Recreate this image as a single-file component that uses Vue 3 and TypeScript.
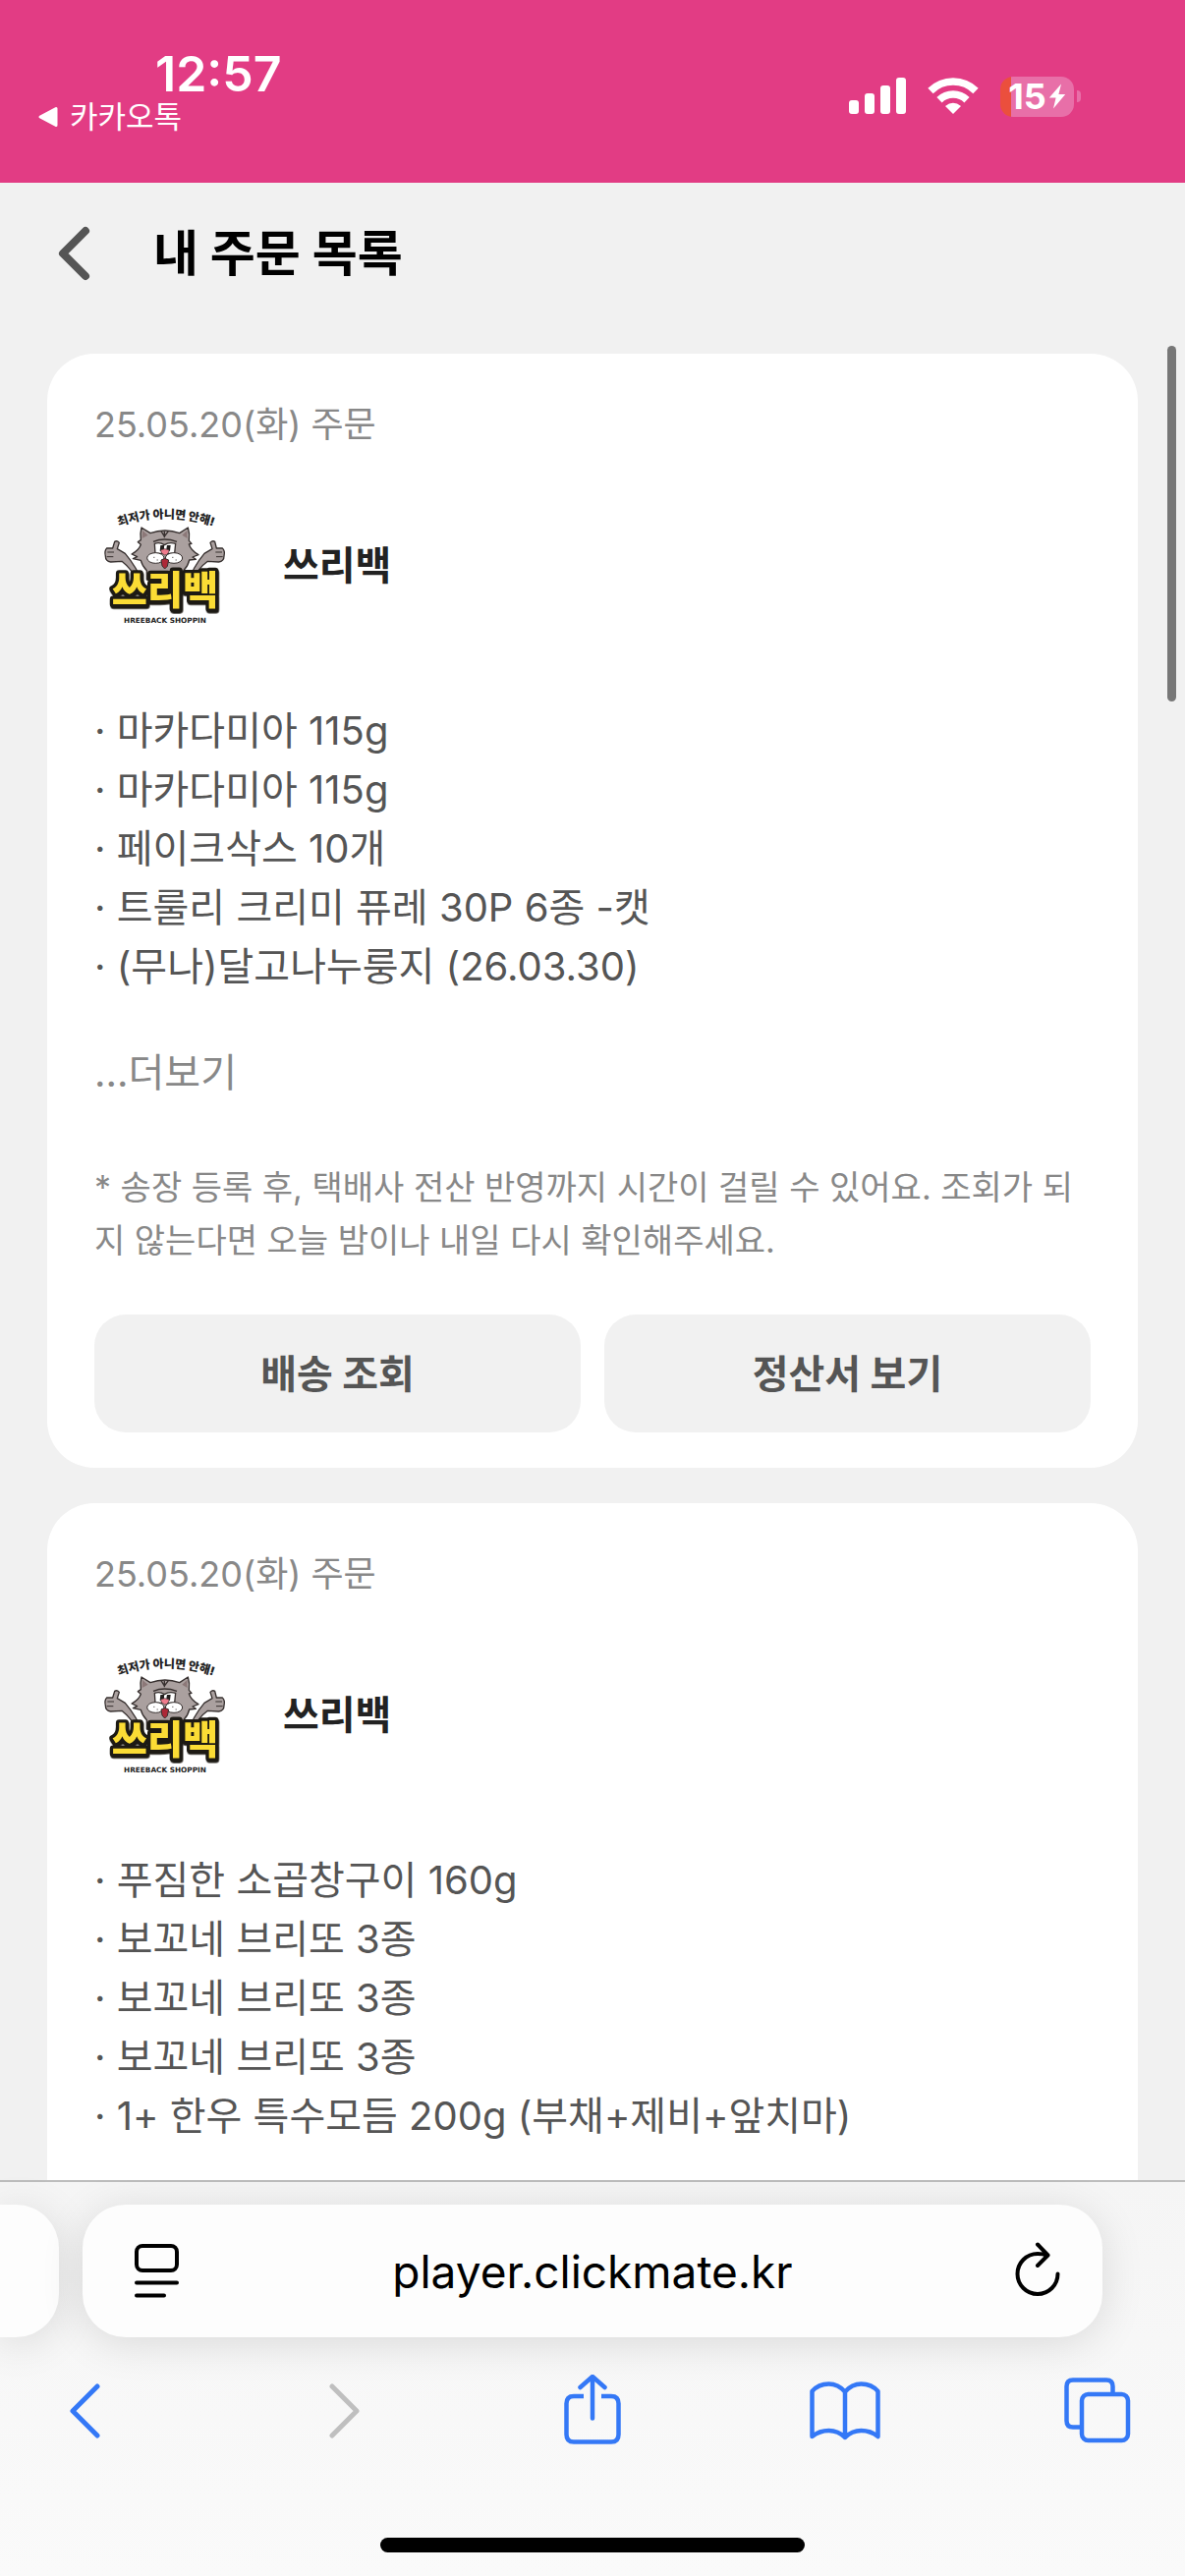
<script setup lang="ts">
interface Order {
  id: number
  date: string
  shop: string
  items: string[]
  complete: boolean
}

const orders: Order[] = [
  {
    id: 1,
    date: '25.05.20(화) 주문',
    shop: '쓰리백',
    items: [
      '마카다미아 115g',
      '마카다미아 115g',
      '페이크삭스 10개',
      '트룰리 크리미 퓨레 30P 6종 -캣',
      '(무나)달고나누룽지 (26.03.30)',
    ],
    complete: true,
  },
  {
    id: 2,
    date: '25.05.20(화) 주문',
    shop: '쓰리백',
    items: [
      '푸짐한 소곱창구이 160g',
      '보꼬네 브리또 3종',
      '보꼬네 브리또 3종',
      '보꼬네 브리또 3종',
      '1+ 한우 특수모듬 200g (부채+제비+앞치마)',
    ],
    complete: false,
  },
]
</script>

<template>
  <div class="screen">
    <header class="status">
      <div class="status-left">
        <span class="clock">12:57</span>
        <a class="back-app" href="#">
          <svg width="22" height="22" viewBox="0 0 22 22"><path d="M19 2.500V19.500L3 11Z" fill="#fff" stroke="#fff" stroke-width="3" stroke-linejoin="round" /></svg>
          <span>카카오톡</span>
        </a>
      </div>
      <div class="status-right">
        <svg width="58" height="38" viewBox="0 0 58 38" fill="#fff">
          <rect x="0" y="23" width="10" height="14" rx="3" />
          <rect x="16" y="16" width="10" height="21" rx="3" />
          <rect x="32" y="8" width="10" height="29" rx="3" />
          <rect x="48" y="0" width="10" height="37" rx="3" />
        </svg>
        <svg width="52" height="38" viewBox="0 0 52 38" fill="none" stroke="#fff" stroke-width="7.500">
          <path d="M3 13.500A32.500 32.500 0 0 1 49 13.500" />
          <path d="M12 22.800A20 20 0 0 1 40 22.800" />
          <path d="M26 37L18 29Q26 22.500 34 29Z" fill="#fff" stroke="none" />
        </svg>
        <div class="battery">
          <div class="battery-body">
            <span>15</span>
            <svg width="18" height="26" viewBox="0 0 18 26"><path d="M13 0.500L0.800 14.500H7.600L5 25.500L17.200 11H10.400Z" fill="#fff" /></svg>
          </div>
          <i class="battery-tip"></i>
        </div>
      </div>
    </header>

    <div class="title-bar">
      <button class="icon-button" type="button" aria-label="뒤로">
        <svg width="34" height="56" viewBox="0 0 34 56" fill="none" stroke="#555" stroke-width="8" stroke-linecap="round" stroke-linejoin="round"><path d="M29 5L6 28L29 51" /></svg>
      </button>
      <h1>내 주문 목록</h1>
    </div>

    <main class="list">
      <article v-for="order in orders" :key="order.id" class="card" :class="{ 'card--cut': !order.complete }">
        <p class="date">{{ order.date }}</p>
        <div class="shop">
          <svg class="logo" viewBox="48 42 432 432">
            <defs>
              <path :id="`arc-${order.id}`" d="M112 141Q264 84 422 141" />
              <clipPath :id="`clip-${order.id}`"><rect x="76" y="66" width="380" height="367" rx="66" /></clipPath>
            </defs>
            <text class="logo-arc" text-anchor="middle"><textPath :href="`#arc-${order.id}`" startOffset="50%">최저가 아니면 안해!</textPath></text>
            <g stroke="#37302f" stroke-width="4" stroke-linejoin="round" stroke-linecap="round" fill="#aaa09f">
              <path d="M200 318Q178 262 142 220L118 206L124 187Q117 179 110 184L104 204L86 204Q78 212 82 228Q82 244 98 246L132 244Q160 266 182 306Z" />
              <path d="M330 318Q348 262 384 220L408 206L402 187Q409 179 416 184L421 204L439 204Q448 212 444 228Q444 244 428 246L394 244Q364 266 346 306Z" />
              <path d="M192 141L219 158Q264 142 308 158L334 141Q340 160 337 181L345 190L337 192Q343 211 366 224L348 231L358 238L338 240Q334 258 322 270L320 300H208V272Q194 258 190 241L166 236L179 230L162 222Q184 211 190 193L181 185L190 179Q187 160 192 141Z" />
            </g>
            <path d="M195 150L194 174L212 164ZM331 150L332 174L316 164Z" fill="#8c7878" />
            <path d="M252 152L262 168L274 152M262 152V172M228 184Q262 170 300 184" fill="none" stroke="#37302f" stroke-width="4" />
            <path d="M88 216H108M86 230H106M438 216H418M440 230H420" stroke="#37302f" stroke-width="3" />
            <path d="M232 190Q248 184 262 194Q276 184 296 190L293 220H234Z" fill="#fff" stroke="#37302f" stroke-width="4" />
            <path d="M250 195H261V212H248ZM270 195H281L279 212H267Z" fill="#211d1d" />
            <path d="M250 210Q263 202 277 210Q274 224 263 225Q252 222 250 210Z" fill="#ef7b8c" stroke="#37302f" stroke-width="2" />
            <ellipse cx="235" cy="234" rx="26" ry="16" fill="#fff" stroke="#37302f" stroke-width="3" />
            <ellipse cx="291" cy="234" rx="26" ry="16" fill="#fff" stroke="#37302f" stroke-width="3" />
            <path d="M252 240Q263 231 275 240L271 259L263 267L255 258Z" fill="#ad2837" stroke="#37302f" stroke-width="3" />
            <path d="M229 232h3M239 240h3M286 232h3M296 240h3M262 278h5" stroke="#37302f" stroke-width="3" />
            <text class="logo-name" x="264" y="376" text-anchor="middle">쓰리백</text>
            <text class="logo-sub" x="264" y="433" text-anchor="middle" :clip-path="`url(#clip-${order.id})`">HREEBACK SHOPPIN</text>
          </svg>
          <h2>{{ order.shop }}</h2>
        </div>
        <ul class="items">
          <li v-for="(item, i) in order.items" :key="i">· {{ item }}</li>
        </ul>
        <template v-if="order.complete">
          <button class="more" type="button">...더보기</button>
          <p class="note">* 송장 등록 후, 택배사 전산 반영까지 시간이 걸릴 수 있어요. 조회가 되지 않는다면 오늘 밤이나 내일 다시 확인해주세요.</p>
          <div class="actions">
            <button type="button">배송 조회</button>
            <button type="button">정산서 보기</button>
          </div>
        </template>
      </article>
      <i class="scroll-thumb"></i>
    </main>

    <footer class="browser">
      <div class="tabs">
        <div class="tab-peek"></div>
        <div class="address">
          <button class="icon-button" type="button" aria-label="페이지 메뉴">
            <svg width="56" height="56" viewBox="-11 0 56 56" fill="none" stroke="#000" stroke-width="4" stroke-linecap="round"><rect x="2" y="2" width="41" height="25" rx="6" /><path d="M2 39.500H43M2 52.500H30" /></svg>
          </button>
          <a class="url" href="#">player.clickmate.kr</a>
          <button class="icon-button" type="button" aria-label="새로고침">
            <svg width="56" height="60" viewBox="-9 0 56 60" fill="none" stroke="#000" stroke-width="4" stroke-linecap="round" stroke-linejoin="round"><path d="M33 13.500Q28 12 23 12A20.500 20.500 0 1 0 43.500 32.500M23 2.500L33.500 13.500L23 24" /></svg>
          </button>
        </div>
      </div>
      <nav class="tools">
        <button class="icon-button" type="button" aria-label="이전">
          <svg width="36" height="56" viewBox="0 0 36 56" fill="none" stroke="#3478f6" stroke-width="5" stroke-linecap="round" stroke-linejoin="round"><path d="M28 3L3 28L28 53" /></svg>
        </button>
        <button class="icon-button" type="button" aria-label="다음" disabled>
          <svg width="42" height="56" viewBox="0 0 42 56" fill="none" stroke="#bfbfbf" stroke-width="5" stroke-linecap="round" stroke-linejoin="round"><path d="M13 3L38 28L13 53" /></svg>
        </button>
        <button class="icon-button" type="button" aria-label="공유">
          <svg width="58" height="74" viewBox="0 0 58 74" fill="none" stroke="#3478f6" stroke-width="4.500" stroke-linecap="round" stroke-linejoin="round"><path d="M20 22H10Q2.500 22 2.500 29.500V61Q2.500 68.500 10 68.500H48Q55.500 68.500 55.500 61V29.500Q55.500 22 48 22H38" stroke-linecap="butt" /><path d="M29 44.500V3M16.500 13L29 2L41.500 13" /></svg>
        </button>
        <button class="icon-button" type="button" aria-label="책갈피">
          <svg width="72" height="60" viewBox="0 0 72 60" fill="none" stroke="#3478f6" stroke-width="4.500" stroke-linecap="round" stroke-linejoin="round"><path d="M36 10.500Q29 2.500 19.500 2.500Q9 2.500 2.500 10V56Q10 50 19.500 50Q29 50 36 57Q43 50 52.500 50Q62 50 69.500 56V10Q63 2.500 52.500 2.500Q43 2.500 36 10.500V57" /></svg>
        </button>
        <button class="icon-button" type="button" aria-label="탭">
          <svg width="68" height="68" viewBox="0 0 68 68" fill="none" stroke="#3478f6" stroke-width="4.500"><path d="M16 50.500H9Q2.500 50.500 2.500 44V9Q2.500 2.500 9 2.500H43Q49.500 2.500 49.500 9V16" /><rect x="18" y="17" width="47" height="47" rx="6.500" /></svg>
        </button>
      </nav>
      <div class="home-bar"></div>
    </footer>
  </div>
</template>

<style>
body {
  margin: 0;
}
</style>

<style scoped>
.screen {
  display: flex;
  flex-direction: column;
  height: 100vh;
  overflow: hidden;
  background: #f1f1f1;
  color: #555;
  font-family: Inter, "Noto Sans CJK KR", sans-serif;
}
h1,
h2,
p,
ul {
  margin: 0;
  padding: 0;
}
button {
  border: 0;
  padding: 0;
  background: none;
  font-family: inherit;
  color: inherit;
}
a {
  color: inherit;
  text-decoration: none;
}
.icon-button {
  display: flex;
  justify-content: center;
}
svg {
  display: block;
  flex: none;
}

.status {
  display: flex;
  flex: none;
  justify-content: space-between;
  box-sizing: border-box;
  height: 186px;
  padding: 45px 106px 0 38px;
  background: #e23c84;
  color: #fff;
}
.status-left {
  display: flex;
  flex-direction: column;
}
.clock {
  padding-left: 120px;
  font-size: 50px;
  font-weight: 600;
  line-height: 60px;
}
.back-app {
  display: flex;
  align-items: center;
  gap: 11px;
  font-size: 31px;
  line-height: 28px;
}
.status-right {
  display: flex;
  align-items: center;
  gap: 22px;
  height: 106px;
}
.battery {
  display: flex;
  align-items: center;
  gap: 3px;
}
.battery-body {
  display: flex;
  align-items: center;
  justify-content: center;
  gap: 2px;
  box-sizing: border-box;
  width: 75px;
  height: 41px;
  border-radius: 13px;
  background: linear-gradient(90deg, #eb4f3d 11px, #e86fa8 11px);
  font-size: 36px;
  font-weight: 700;
}
.battery-tip {
  width: 4px;
  height: 12px;
  border-radius: 0 6px 6px 0;
  background: #e86fa8;
}

.title-bar {
  display: flex;
  flex: none;
  align-items: center;
  gap: 64px;
  height: 144px;
  padding: 0 58px;
}
.title-bar h1 {
  color: #000;
  font-size: 50px;
  font-weight: 700;
  line-height: 60px;
}

.list {
  position: relative;
  display: flex;
  flex: 1;
  flex-direction: column;
  gap: 36px;
  min-height: 0;
  padding: 30px 48px 0;
  overflow: hidden;
}
.card {
  flex: none;
  padding: 48px 48px 36px;
  border-radius: 48px;
  background: #fff;
}
.card--cut {
  flex: 1;
  padding-bottom: 0;
  border-radius: 48px 48px 0 0;
}
.date {
  color: #888;
  font-size: 36px;
  line-height: 48px;
}
.shop {
  display: flex;
  align-items: center;
  gap: 48px;
  margin-top: 48px;
}
.logo {
  width: 144px;
  height: 144px;
}
.logo-arc {
  fill: #222;
  font-size: 36px;
  font-weight: 900;
}
.logo-name {
  fill: #fbdc35;
  stroke: #1d1a14;
  stroke-width: 20px;
  stroke-linejoin: round;
  paint-order: stroke;
  font-size: 118px;
  font-weight: 900;
  filter: drop-shadow(2px 5px 0 #1d1a14);
}
.logo-sub {
  fill: #222;
  font-family: "DejaVu Sans", sans-serif;
  font-size: 22px;
  font-weight: 700;
}
.shop h2 {
  color: #222;
  font-size: 40px;
  font-weight: 700;
  line-height: 48px;
}
.items {
  margin-top: 66px;
  list-style: none;
  font-size: 40px;
  line-height: 60px;
}
.more {
  display: block;
  margin-top: 48px;
  color: #888;
  font-size: 40px;
  line-height: 60px;
}
.note {
  margin-top: 60px;
  color: #888;
  font-size: 34px;
  line-height: 54px;
  word-break: break-all;
}
.actions {
  display: flex;
  gap: 24px;
  margin-top: 48px;
}
.actions button {
  flex: 1;
  height: 120px;
  padding-bottom: 4px;
  border-radius: 32px;
  background: #f1f1f1;
  font-size: 40px;
  font-weight: 700;
}
.scroll-thumb {
  position: absolute;
  top: 22px;
  right: 9px;
  width: 9px;
  height: 362px;
  border-radius: 5px;
  background: #777;
}

.browser {
  flex: none;
  border-top: 2px solid #bdbdbd;
  background: linear-gradient(#f5f5f5, #fafafa);
}
.tabs {
  display: flex;
  gap: 24px;
  padding: 23px 84px 0 0;
}
.tab-peek {
  width: 60px;
  border-radius: 0 44px 44px 0;
  background: #fdfdfd;
  box-shadow: 0 6px 44px rgba(0, 0, 0, 0.12);
}
.address {
  display: flex;
  flex: 1;
  align-items: center;
  justify-content: space-between;
  box-sizing: border-box;
  height: 135px;
  padding: 0 42px;
  border-radius: 44px;
  background: #fdfdfd;
  box-shadow: 0 6px 44px rgba(0, 0, 0, 0.12);
}
.url {
  color: #000;
  font-size: 46px;
  line-height: 60px;
}
.tools {
  display: flex;
  align-items: center;
  justify-content: space-between;
  height: 150px;
  padding: 0 53px;
}
.tools .icon-button {
  width: 72px;
}
.home-bar {
  width: 432px;
  height: 15px;
  margin: 54px auto 24px;
  border-radius: 8px;
  background: #000;
}
</style>
